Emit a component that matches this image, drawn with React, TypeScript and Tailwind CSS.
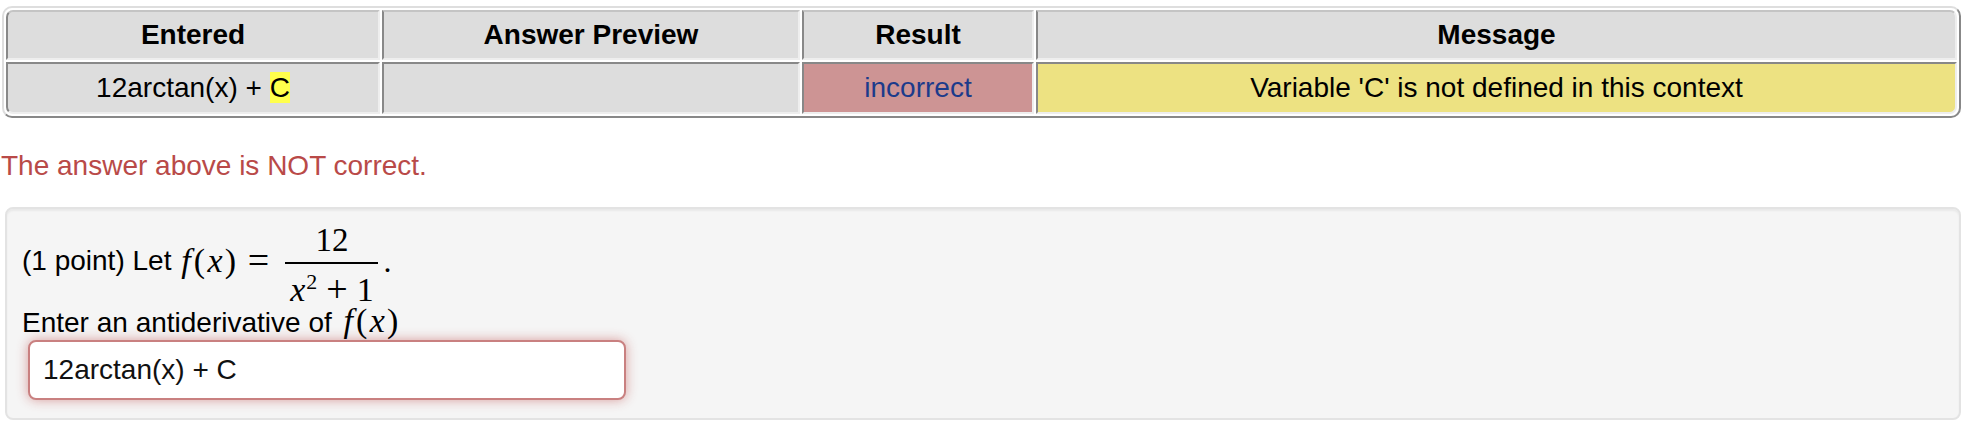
const cell =
  'p-0 text-center align-middle border-2 border-t-[#888] border-l-[#888] border-b-[#eee] border-r-[#eee]'
const head =
  'p-0 h-[50px] text-center align-middle font-bold bg-[#dddddd] border-2 border-t-[#c4c4c4] border-l-[#888] border-b-[#eee] border-r-[#eee]'

const serif = "font-['Liberation_Serif','Times_New_Roman',serif]"

function Fx() {
  return (
    <span className={'flex text-[34px] leading-[32px] ' + serif}>
      <span className="w-[15px] text-center italic">f</span>
      <span className="w-[12px] text-center">(</span>
      <span className="w-[19px] text-center italic">x</span>
      <span className="w-[12px] text-center">)</span>
    </span>
  )
}

function Fraction() {
  return (
    <span className={'ml-[15px] flex w-[93px] flex-col items-center text-[33px] ' + serif}>
      <span className="h-[31px] leading-[31px]">12</span>
      <span className="mt-[6px] h-[2px] w-full bg-black" />
      <span className="mt-[10px] flex h-[31px] items-start leading-[31px]">
        <span className="text-[34px] italic">x</span>
        <span className="ml-[1px] -mt-[3px] text-[22px] leading-[22px]">2</span>
        <span className="mx-[9px] text-[38px] leading-[31px]">+</span>
        <span className="text-[34px]">1</span>
      </span>
    </span>
  )
}

export default function App() {
  return (
    <div className="h-[430px] w-[1974px] overflow-hidden bg-white font-['Liberation_Sans',Arial,sans-serif] text-[28px] text-black">
      <div className="pt-[6px] pl-[2px]">
        <table className="w-[1959px] table-fixed border-separate border-spacing-[2px] rounded-[10px] border-2 border-t-[#dedede] border-l-[#dedede] border-b-[#888] border-r-[#888]">
          <colgroup>
            <col className="w-[374px]" />
            <col className="w-[418px]" />
            <col className="w-[232px]" />
            <col className="w-[921px]" />
          </colgroup>
          <thead>
            <tr>
              <th className={head + ' rounded-tl-[7px]'}>Entered</th>
              <th className={head}>Answer Preview</th>
              <th className={head}>Result</th>
              <th className={head + ' rounded-tr-[7px]'}>Message</th>
            </tr>
          </thead>
          <tbody>
            <tr>
              <td className={cell + ' h-[52px] rounded-bl-[7px] bg-[#dddddd]'}>
                12arctan(x) + <span className="bg-[#ffff4c]">C</span>
              </td>
              <td className={cell + ' bg-[#dddddd]'} />
              <td className={cell + ' bg-[#cd9494] text-[#1c3b8b]'}>incorrect</td>
              <td className={cell + ' rounded-br-[7px] bg-[#ede282]'}>
                Variable 'C' is not defined in this context
              </td>
            </tr>
          </tbody>
        </table>
      </div>

      <p className="mt-[32px] pl-[1px] leading-[32px] text-[#b94a48]">The answer above is NOT correct.</p>

      <div className="mt-[25px] ml-[5px] h-[213px] w-[1956px] rounded-[8px] border-2 border-[#e3e3e3] bg-[#f5f5f5] pt-[16px] pl-[15px] shadow-[inset_0_2px_2px_rgba(0,0,0,0.05)]">
        <div className="flex h-[80px] items-start">
          <span className="mt-[20px] leading-[32px]">(1 point) Let</span>
          <span className="mt-[20px] ml-[7px]">
            <Fx />
          </span>
          <span className={'mt-[19px] ml-[10px] w-[24px] text-center text-[38px] leading-[32px] ' + serif}>=</span>
          <Fraction />
          <span className={'mt-[20px] ml-[5px] text-[32px] leading-[32px] ' + serif}>.</span>
        </div>
        <div className="flex h-[32px] items-baseline leading-[32px]">
          <span>Enter an antiderivative of</span>
          <span className="ml-[9px]">
            <Fx />
          </span>
        </div>
        <input
          readOnly
          value="12arctan(x) + C"
          className="mt-[3px] ml-[6px] block h-[60px] w-[598px] rounded-[8px] border-2 border-[#c98080] bg-white pl-[13px] text-[28px] text-[#111] shadow-[0_0_12px_rgba(213,147,146,0.9)] outline-none"
        />
      </div>
    </div>
  )
}
